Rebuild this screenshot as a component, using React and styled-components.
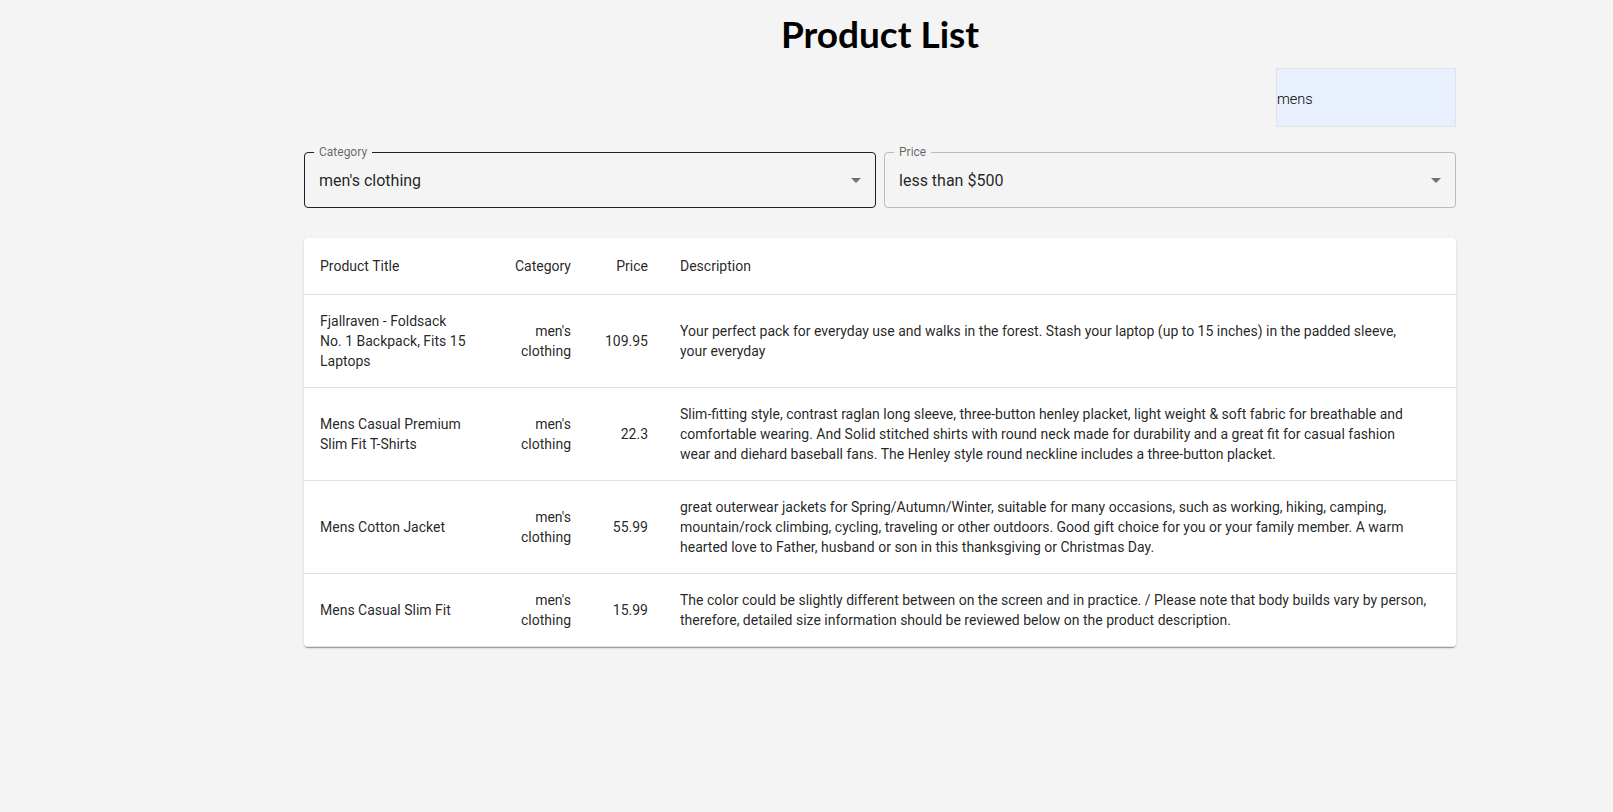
import styled, { createGlobalStyle } from "styled-components";

const GlobalStyle = createGlobalStyle`
  body {
    margin: 0;
    background: #f4f4f4;
    font-family: Roboto, "Liberation Sans", sans-serif;
    color: rgba(0, 0, 0, 0.87);
  }
`;

// non-breaking spaces keep the line breaks the same as in the live table
const products = [
  {
    title: "Fjallraven - Foldsack No. 1 Backpack, Fits 15 Laptops",
    category: "men's clothing",
    price: 109.95,
    description:
      "Your perfect pack for everyday use and walks in the forest. Stash your laptop (up to 15 inches) in the padded sleeve, your\u00a0everyday",
  },
  {
    title: "Mens Casual Premium Slim Fit T-Shirts",
    category: "men's clothing",
    price: 22.3,
    description:
      "Slim-fitting style, contrast raglan long sleeve, three-button henley placket, light weight & soft fabric for breathable and comfortable wearing. And Solid stitched shirts with round neck made for durability and a great fit for casual fashion wear\u00a0and diehard baseball fans. The Henley style round neckline includes a three-button placket.",
  },
  {
    title: "Mens Cotton Jacket",
    category: "men's clothing",
    price: 55.99,
    description:
      "great outerwear jackets for Spring/Autumn/Winter, suitable for many occasions, such as working, hiking, camping, mountain/rock climbing, cycling, traveling or other outdoors. Good gift choice for you or your family member. A warm hearted love to Father, husband or son in this thanksgiving or Christmas Day.",
  },
  {
    title: "Mens Casual Slim Fit",
    category: "men's clothing",
    price: 15.99,
    description:
      "The color could be slightly different between on the screen and in practice. / Please note that body builds vary by person, therefore, detailed size information should be reviewed below on the product description.",
  },
];

const Page = styled.main`
  width: 1152px;
  padding-left: 304px;
  padding-bottom: 40px;
`;

const Title = styled.h1`
  margin: 0;
  padding-top: 11px;
  font-family: Lato, "Open Sans", sans-serif;
  font-size: 37px;
  font-weight: 700;
  line-height: 46px;
  text-align: center;
  color: #000;
`;

const SearchRow = styled.div`
  display: flex;
  justify-content: flex-end;
  margin-top: 11px;
`;

const SearchInput = styled.input`
  box-sizing: border-box;
  width: 180px;
  height: 59px;
  padding: 3px 0 0;
  border: 1px solid #e2e2e2;
  background: #e8f0fe;
  font-family: Roboto, sans-serif;
  font-size: 14.5px;
  font-weight: 300;
  color: #000;
  outline: none;
`;

const Filters = styled.div`
  display: grid;
  grid-template-columns: 1fr 1fr;
  gap: 8px;
  margin-top: 25px;
`;

const SelectBox = styled.div`
  position: relative;
  box-sizing: border-box;
  height: 56px;
  padding: 0 14px;
  display: flex;
  align-items: center;
  border: 1px solid ${(p) => (p.$active ? "rgba(0,0,0,0.87)" : "rgba(0,0,0,0.23)")};
  border-radius: 4px;
  font-size: 16px;
  color: rgba(0, 0, 0, 0.87);
  cursor: pointer;
`;

const FloatLabel = styled.span`
  position: absolute;
  top: -8px;
  left: 9px;
  padding: 0 5px;
  background: #f4f4f4;
  font-size: 12px;
  line-height: 14px;
  color: rgba(0, 0, 0, 0.6);
`;

const Arrow = styled.svg`
  position: absolute;
  right: 7px;
  top: calc(50% - 12px);
  width: 24px;
  height: 24px;
  fill: rgba(0, 0, 0, 0.54);
`;

const Paper = styled.div`
  margin-top: 30px;
  background: #fff;
  border-radius: 4px;
  overflow: hidden;
  box-shadow: 0px 2px 1px -1px rgba(0, 0, 0, 0.2),
    0px 1px 1px 0px rgba(0, 0, 0, 0.14), 0px 1px 3px 0px rgba(0, 0, 0, 0.12);
`;

const Table = styled.table`
  width: 100%;
  border-collapse: collapse;
  table-layout: fixed;
`;

const Cell = styled.td`
  padding: 16px;
  border-bottom: 1px solid rgb(224, 224, 224);
  font-size: 14px;
  line-height: 20px;
  text-align: ${(p) => (p.$right ? "right" : "left")};
  vertical-align: middle;
  color: rgba(0, 0, 0, 0.87);
`;

const HeadCell = styled(Cell).attrs({ as: "th" })`
  line-height: 24px;
  font-weight: 400;
`;

const Select = ({ label, value, active }) => (
  <SelectBox $active={active}>
    <FloatLabel>{label}</FloatLabel>
    {value}
    <Arrow viewBox="0 0 24 24">
      <path d="M7 10l5 5 5-5z" />
    </Arrow>
  </SelectBox>
);

export default function App() {
  return (
    <>
      <GlobalStyle />
      <Page>
        <Title>Product List</Title>
        <SearchRow>
          <SearchInput defaultValue="mens" />
        </SearchRow>
        <Filters>
          <Select label="Category" value="men's clothing" active />
          <Select label="Price" value="less than $500" />
        </Filters>
        <Paper>
          <Table>
            <colgroup>
              <col style={{ width: 182 }} />
              <col style={{ width: 101 }} />
              <col style={{ width: 77 }} />
              <col />
            </colgroup>
            <thead>
              <tr>
                <HeadCell>Product Title</HeadCell>
                <HeadCell $right>Category</HeadCell>
                <HeadCell $right>Price</HeadCell>
                <HeadCell>Description</HeadCell>
              </tr>
            </thead>
            <tbody>
              {products.map((p) => (
                <tr key={p.title}>
                  <Cell>{p.title}</Cell>
                  <Cell $right>{p.category}</Cell>
                  <Cell $right>{p.price}</Cell>
                  <Cell>{p.description}</Cell>
                </tr>
              ))}
            </tbody>
          </Table>
        </Paper>
      </Page>
    </>
  );
}
